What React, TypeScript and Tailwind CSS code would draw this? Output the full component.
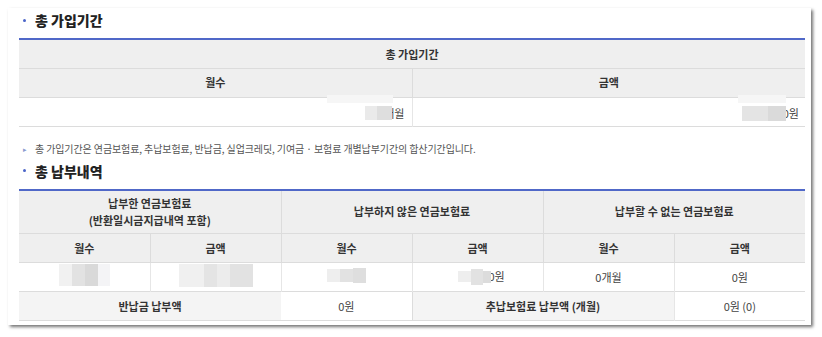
const font = { fontFamily: '"Noto Sans CJK KR", "Noto Sans", sans-serif' };

function SectionTitle({ children }: { children: string }) {
  return (
    <div className="flex h-[24px] items-center pl-[4px]">
      <span className="mr-[9px] h-[3px] w-[3px] rounded-full bg-[#4a64c8]" />
      <h2 className="text-[14px] font-extrabold leading-none text-[#222]">{children}</h2>
    </div>
  );
}

// masked value cell: soft grey blocks in front of the unit
function Masked({ blocks }: { blocks: string[] }) {
  return (
    <span className="inline-flex items-center">
      {blocks.map((c, i) => (
        <span key={i} className={`inline-block blur-[0.5px] ${c}`} />
      ))}
    </span>
  );
}

const th = "border-l border-[#dcdcdc] first:border-l-0 bg-[#efefef] font-bold text-[#333]";
const td = "border-l border-[#e6e6e6] first:border-l-0 bg-white text-[#444]";

export default function App() {
  return (
    <div className="h-[337px] w-[822px] bg-white pl-[8px] pt-[8px]" style={font}>
      <div className="h-[317px] w-[803px] bg-white pl-[11px] shadow-[2px_2px_3px_rgba(0,0,0,0.55)]">
        <SectionTitle>총 가입기간</SectionTitle>
        <div className="h-[6px]" />
        <table className="w-[786px] table-fixed border-collapse border-t-2 border-[#5068c8] text-center text-[11px]">
          <tbody>
            <tr className="h-[29px] border-b border-[#dcdcdc]">
              <td colSpan={2} className={th}>총 가입기간</td>
            </tr>
            <tr className="h-[29px] border-b border-[#dcdcdc]">
              <td className={th}>월수</td>
              <td className={th}>금액</td>
            </tr>
            <tr className="h-[29px] border-b border-[#dcdcdc]">
              <td className={`${td} pr-[7px] text-right`}>
                <span className="relative inline-flex items-center pt-[6px]">
                  <span className="absolute -top-[4px] right-[12px] h-[8px] w-[66px] bg-[#f6f6f6]" />
                  <span className="z-10 h-[14px] w-[12px] bg-[#eaeaea]" />
                  <span className="z-10 h-[14px] w-[15px] bg-[#dedede]" />
                  <span className="-ml-[8px]">개월</span>
                </span>
              </td>
              <td className={`${td} pr-[6px] text-right`}>
                <span className="relative inline-flex items-center pt-[6px]">
                  <span className="absolute -top-[4px] right-[13px] h-[8px] w-[48px] bg-[#f6f6f6]" />
                  <span className="h-[15px] w-[26px] bg-[#e4e4e4]" />
                  <span className="z-10 h-[15px] w-[18px] bg-[#dadada]" />
                  <span className="-ml-[3px]">0원</span>
                </span>
              </td>
            </tr>
          </tbody>
        </table>

        <div className="flex h-[28px] items-start pl-[4px] pt-[16px] text-[10px] leading-[12px] tracking-[-0.1px] text-[#555]">
          <span className="mr-[8px] text-[7px] leading-[12px] text-[#8a9ad0]">▸</span>
          총 가입기간은 연금보험료, 추납보험료, 반납금, 실업크레딧, 기여금 · 보험료 개별납부기간의 합산기간입니다.
        </div>

        <div className="mt-[4px]">
          <SectionTitle>총 납부내역</SectionTitle>
        </div>
        <div className="h-[6px]" />
        <table className="w-[786px] table-fixed border-collapse border-t-2 border-[#5068c8] text-center text-[11px]">
          <tbody>
            <tr className="h-[44px] border-b border-[#dcdcdc] leading-[17px]">
              <td colSpan={2} className={th}>
                납부한 연금보험료
                <br />
                (반환일시금지급내역 포함)
              </td>
              <td colSpan={2} className={th}>납부하지 않은 연금보험료</td>
              <td colSpan={2} className={th}>납부할 수 없는 연금보험료</td>
            </tr>
            <tr className="h-[29px] border-b border-[#dcdcdc]">
              <td className={th}>월수</td>
              <td className={th}>금액</td>
              <td className={th}>월수</td>
              <td className={th}>금액</td>
              <td className={th}>월수</td>
              <td className={th}>금액</td>
            </tr>
            <tr className="h-[29px] border-b border-[#dcdcdc]">
              <td className={td}>
                <Masked blocks={["w-[13px] h-[22px] bg-[#f1f1f1]", "w-[13px] h-[22px] bg-[#e2e2e2]", "w-[13px] h-[22px] bg-[#d9d9d9]", "w-[12px] h-[22px] bg-[#f4f4f6]"]} />
              </td>
              <td className={td}>
                <Masked blocks={["w-[25px] h-[23px] bg-[#f0f0f0]", "w-[13px] h-[23px] bg-[#e4e4e4]", "w-[13px] h-[23px] bg-[#ececec]", "w-[23px] h-[23px] bg-[#e2e2e2]"]} />
              </td>
              <td className={td}>
                <Masked blocks={["w-[13px] h-[13px] bg-[#eeeeee]", "w-[13px] h-[13px] bg-[#e2e2e2]", "w-[13px] h-[15px] bg-[#dedede]"]} />
              </td>
              <td className={td}>
                <span className="inline-flex items-center pl-[8px]">
                  <span className="h-[11px] w-[13px] bg-[#eeeeee]" />
                  <span className="h-[16px] w-[12px] bg-[#e2e2e2]" />
                  <span className="z-10 h-[12px] w-[8px] bg-[#dcdcdc]" />
                  <span className="-ml-[3px]">0원</span>
                </span>
              </td>
              <td className={td}>0개월</td>
              <td className={td}>0원</td>
            </tr>
            <tr className="h-[29px] border-b border-[#dcdcdc]">
              <td colSpan={2} className="bg-[#f4f4f4] font-bold text-[#333]">반납금 납부액</td>
              <td className="bg-white text-[#444]">0원</td>
              <td colSpan={2} className="border-l border-[#dcdcdc] bg-[#f4f4f4] font-bold text-[#333]">
                추납보험료 납부액 (개월)
              </td>
              <td className="border-l border-[#e6e6e6] bg-white text-[#444]">0원 (0)</td>
            </tr>
          </tbody>
        </table>
      </div>
    </div>
  );
}
